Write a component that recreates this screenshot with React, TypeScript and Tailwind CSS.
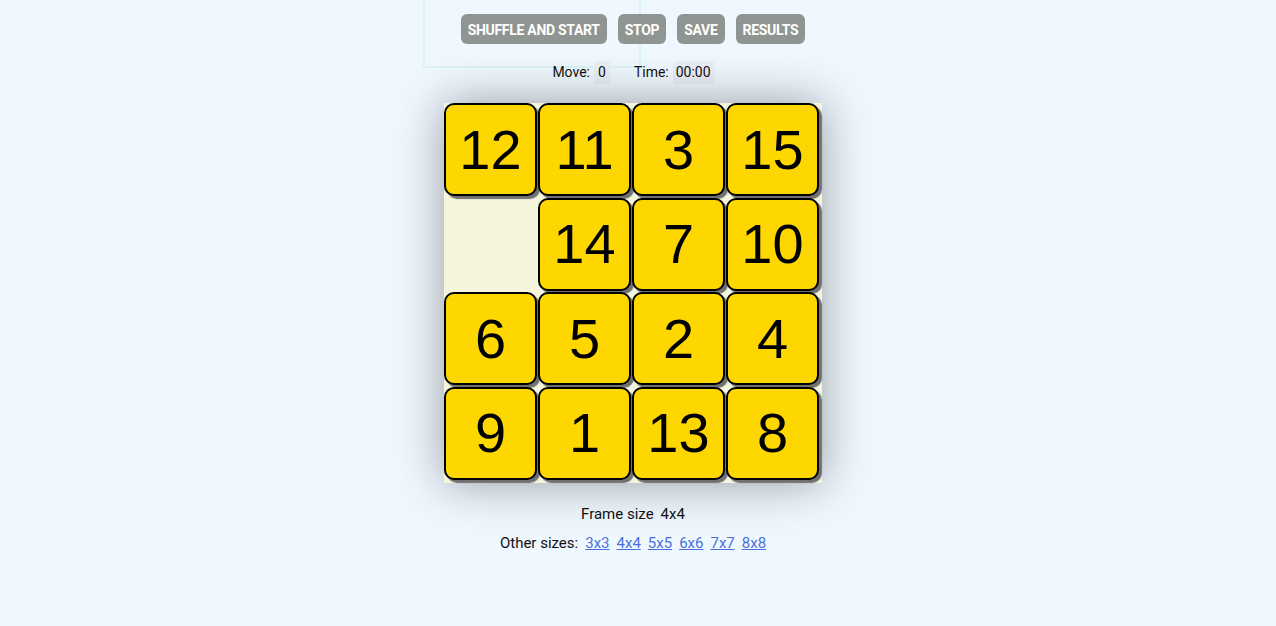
const tiles: (number | null)[] = [12, 11, 3, 15, null, 14, 7, 10, 6, 5, 2, 4, 9, 1, 13, 8];
const sizes = ["3x3", "4x4", "5x5", "6x6", "7x7", "8x8"];

const App = () => {
    return (
        <div className="relative min-h-[626px] w-full bg-[#f0f8ff] font-['Roboto',sans-serif] text-[14px] text-[#111]">
            {/* faint outline behind the toolbar */}
            <div className="absolute left-[423px] top-[-10px] h-[78px] w-[218px] border-2 border-[#dcf3f5]" />
            <div className="relative flex flex-col items-center pr-[10px]">
                <div className="mt-[14px] flex gap-[11px]">
                    {["SHUFFLE AND START", "STOP", "SAVE", "RESULTS"].map((b) => (
                        <button
                            key={b}
                            className="h-[30px] rounded-[6px] bg-[#8f9590] px-[7px] pt-[2px] text-[14px] font-bold tracking-[-0.3px] text-white"
                        >
                            {b}
                        </button>
                    ))}
                </div>
                <div className="mt-[17px] flex h-[22px] items-center">
                    <span>Move:</span>
                    <span className="ml-[4px] rounded-[3px] bg-[#e9eff5] px-[4px] py-[1px]">0</span>
                    <span className="ml-[24px]">Time:</span>
                    <span className="ml-[4px] rounded-[3px] bg-[#e9eff5] px-[3px] py-[1px]">00:00</span>
                </div>
                <div className="mt-[20px] grid h-[380px] w-[378px] grid-cols-[repeat(4,94px)] grid-rows-[repeat(4,94.5px)] bg-[#f5f5dc] shadow-[0_0_44px_rgba(0,0,0,0.38)]">
                    {tiles.map((t, i) =>
                        t === null ? (
                            <div key={i} />
                        ) : (
                            <div
                                key={i}
                                className="flex h-[93px] w-[93px] items-center justify-center rounded-[10px] border-2 border-black bg-[#ffd700] font-['Liberation_Sans',Arial,sans-serif] text-[56px] leading-none text-black shadow-[3px_3px_1px_#707070]"
                            >
                                {t}
                            </div>
                        )
                    )}
                </div>
                <div className="mt-[21px] flex h-[20px] items-center text-[15px]">
                    <span>Frame size</span>
                    <span className="ml-[7px]">4x4</span>
                </div>
                <div className="mt-[9px] flex h-[20px] items-center gap-[7px] text-[15px]">
                    <span>Other sizes:</span>
                    {sizes.map((s) => (
                        <a key={s} href="#" className="text-[#4a6fdc] underline">
                            {s}
                        </a>
                    ))}
                </div>
            </div>
        </div>
    );
};

export default App;
